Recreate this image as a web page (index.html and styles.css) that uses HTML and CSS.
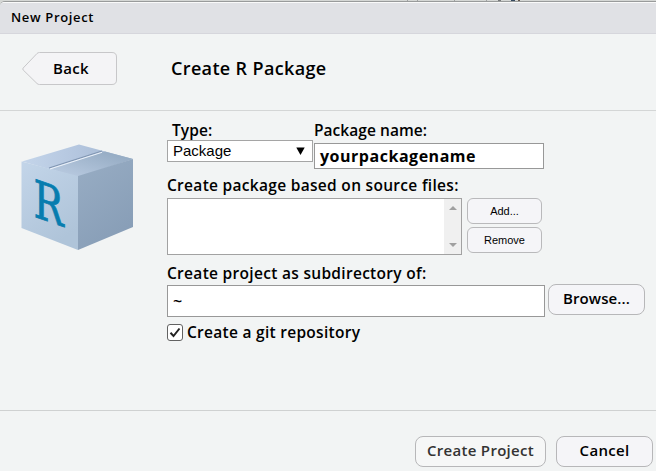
FILE: index.html
```
<!DOCTYPE html>
<html lang="en">
<head>
<meta charset="utf-8">
<title>New Project</title>
<link rel="stylesheet" href="styles.css">
</head>
<body>
<div class="backdrop"><i class="tick t1"></i><i class="tick t2"></i><i class="tick t3"></i><i class="tick t4"></i><i class="tick t5"></i><i class="tick t6"></i><i class="tick t7"></i></div>
<main class="dialog">
  <header class="titlebar"><span class="title">New Project</span></header>
  <div class="heading">
    <button class="back">
      <svg class="back-shape" width="96" height="34" viewBox="0 0 96 34"><path d="M17.500 .5H90q4.500 0 4.500 4.500V28q0 4.500-4.500 4.500H17.500Q16 32.500 15 31.500L1.200 18Q.3 17 1.200 16L15 1.500Q16 .5 17.500 .5Z" fill="#f4f4f6" stroke="#c7c7c9"/></svg>
      <span class="back-label">Back</span>
    </button>
    <h1>Create R Package</h1>
  </div>
  <section class="body">
    <svg class="cube" width="112" height="107" viewBox="0 0 112 107">
      <defs>
        <linearGradient id="top" x1="0" y1="0" x2="1" y2="0"><stop offset="0" stop-color="#c4d5ea"/><stop offset=".5" stop-color="#b4c6df"/><stop offset="1" stop-color="#a0b4cd"/></linearGradient>
        <linearGradient id="flap" x1="0" y1="1" x2="1" y2="0"><stop offset="0" stop-color="#bdcee4"/><stop offset="1" stop-color="#8fa6be"/></linearGradient>
        <linearGradient id="front" x1="0" y1="0" x2=".5" y2="1"><stop offset="0" stop-color="#c3d5e9"/><stop offset="1" stop-color="#afc4d9"/></linearGradient>
        <linearGradient id="side" x1="0" y1="0" x2=".5" y2="1"><stop offset="0" stop-color="#98adc4"/><stop offset="1" stop-color="#889eb7"/></linearGradient>
      </defs>
      <path d="M1 17.500L58 .5L112 15L57 33Z" fill="url(#top)"/>
      <path d="M29 24.500L84 7.500L112 15L57 33Z" fill="url(#flap)"/>
      <path d="M.5 17.500L57 32V106L.5 84Z" fill="url(#front)"/>
      <path d="M57 32L112 15V83L57 106Z" fill="url(#side)"/>
      <path d="M28 24L81 7" stroke="#8196b2" stroke-width="1.200"/>
      <path d="M29 25L81 8.300" stroke="#edf3fa"/>
      <text class="cube-letter" transform="translate(12.500 72.500) skewY(19) scale(.77 1)">R</text>
    </svg>
    <form class="fields">
      <div class="row">
        <div class="type-col">
          <label class="l-type">Type:</label>
          <div class="select"><span class="select-value">Package</span><svg width="9" height="8" viewBox="0 0 9 8"><path d="M.3 .5H8.700L4.500 8Z"/></svg></div>
        </div>
        <div class="name-col">
          <label class="l-name">Package name:</label>
          <div class="input name"><span class="v-name">yourpackagename</span></div>
        </div>
      </div>
      <label class="l-source">Create package based on source files:</label>
      <div class="row source">
        <div class="list"><div class="scroll"><i class="up"></i><i class="down"></i></div></div>
        <div class="stack"><button type="button" class="small">Add...</button><button type="button" class="small">Remove</button></div>
      </div>
      <label class="l-sub">Create project as subdirectory of:</label>
      <div class="row sub">
        <div class="input path">~</div>
        <button type="button" class="btn browse"><span class="b-browse">Browse...</span></button>
      </div>
      <div class="check">
        <svg width="16" height="17" viewBox="0 0 16 17"><rect x=".5" y=".5" width="15" height="16" rx="2.500" fill="#fff" stroke="#626262"/><path d="M3.500 8.800L6.500 12L12.500 4.500" fill="none" stroke="#222" stroke-width="2"/></svg>
        <span class="l-git">Create a git repository</span>
      </div>
    </form>
  </section>
  <footer class="actions">
    <button class="btn create"><span class="b-create">Create Project</span></button>
    <button class="btn cancel"><span class="b-cancel">Cancel</span></button>
  </footer>
</main>
</body>
</html>
```
FILE: styles.css
```
* { box-sizing: border-box; }
body { margin: 0; width: 656px; height: 471px; overflow: hidden; background: #d5d7d5; color: #000; font: 600 15px/20px "Open Sans", "Noto Sans", sans-serif; }
h1 { margin: 0; font-size: 18px; line-height: 24px; font-weight: 600; letter-spacing: .35px; }
button { font: inherit; color: inherit; padding: 0; margin: 0; }
span { white-space: nowrap; }
.backdrop { height: 1px; display: flex; padding-left: 407px; }
.tick { width: 1px; height: 1px; background: #a0a2a3; margin-right: 9px; }
.t2 { margin-right: 36px; }
.t3 { margin-right: 31px; }
.t4 { margin-right: 11px; }
.t5 { width: 3px; margin-right: 10px; background: #77797a; }
.t6 { width: 4px; margin-right: 3px; background: #34495f; }
.t7 { width: 2px; background: #65564a; }
.dialog { height: 470px; background: #f2f4f4; border-top: 1px solid #999b9b; border-radius: 5px 0 0 0; overflow: hidden; }
.titlebar { height: 32px; border-top: 1px solid #fafafa; border-bottom: 1px solid #d6d6dc; background: #e0e1e5; padding: 4px 0 0 11px; font-size: 13px; line-height: 20px; letter-spacing: .65px; }
.heading { height: 77px; border-bottom: 1px solid #d4d6d6; display: flex; align-items: flex-start; padding: 18px 0 0 22px; }
.back { position: relative; width: 96px; height: 34px; border: 0; background: none; margin-right: 52px; text-align: left; padding-left: 31px; }
.back-shape { position: absolute; left: 0; top: 0; }
.back-label { position: relative; top: -1px; letter-spacing: .3px; }
.heading h1 { margin-top: 4px; margin-left: 1px; }
.body { display: flex; height: 299px; padding-left: 21px; }
.cube { margin-top: 33px; margin-right: 34px; flex: none; }
.cube-letter { font: 52px "DejaVu Serif", serif; fill: #077daf; stroke: #077daf; stroke-width: .8; }
.fields { margin: 0; padding-top: 9px; }
label { display: block; height: 20px; white-space: nowrap; font-size: 15.5px; letter-spacing: .3px; }
.row { display: flex; }
.type-col { width: 147px; }
.type-col label { padding-left: 5px; }
.type-col .l-type { letter-spacing: .1px; }
.l-name { letter-spacing: .05px; }
.select { width: 146px; height: 22px; border: 1px solid #a5a5a5; background: #fff; display: flex; align-items: center; justify-content: space-between; padding: 0 7px 0 5px; font: 15px/20px "Liberation Sans", sans-serif; }
.input { background: #fff; border: 1px solid #989898; padding-left: 5px; }
.name { width: 230px; height: 26px; margin-top: 3px; font-size: 16px; line-height: 24px; font-weight: 700; letter-spacing: .52px; }
.l-source { margin-top: 6px; }
.source { margin-top: 3px; gap: 5px; height: 57px; }
.list { width: 295px; height: 57px; border: 1px solid #a2a2a2; background: #fff; display: flex; justify-content: flex-end; }
.scroll { width: 17px; background: #f0f0f0; display: flex; flex-direction: column; justify-content: space-between; align-items: center; padding: 7px 0; }
.up, .down { border: 4px solid transparent; width: 0; height: 0; }
.up { border-top: 0; border-bottom-color: #a0a0a0; }
.down { border-bottom: 0; border-top-color: #a0a0a0; }
.stack { display: flex; flex-direction: column; gap: 3px; }
.small { width: 75px; height: 26px; flex: none; border: 1px solid #b9b9bb; border-radius: 6px; background: #f5f5f8; font: 11px/24px "Liberation Sans", sans-serif; }
.l-sub { margin-top: 8px; }
.sub { margin-top: 2px; gap: 3px; }
.path { width: 378px; height: 32px; font-size: 16px; line-height: 31px; }
.btn { border: 1px solid #b7b7b9; border-radius: 8px; height: 31px; background: #f5f5f8; padding-bottom: 3px; }
.browse { width: 97px; margin-top: -1px; letter-spacing: .1px; }
.check { display: flex; align-items: center; gap: 4px; margin-top: 6px; height: 19px; }
.l-git { font-size: 15.5px; letter-spacing: .28px; position: relative; top: -1px; }
.actions { height: 61px; border-top: 1px solid #cfd1d1; display: flex; justify-content: flex-end; gap: 10px; padding: 25px 3px 0 0; }
.create { width: 131px; color: #333; background: #f6f7f7; letter-spacing: .3px; }
.cancel { width: 97px; letter-spacing: .3px; }
```
